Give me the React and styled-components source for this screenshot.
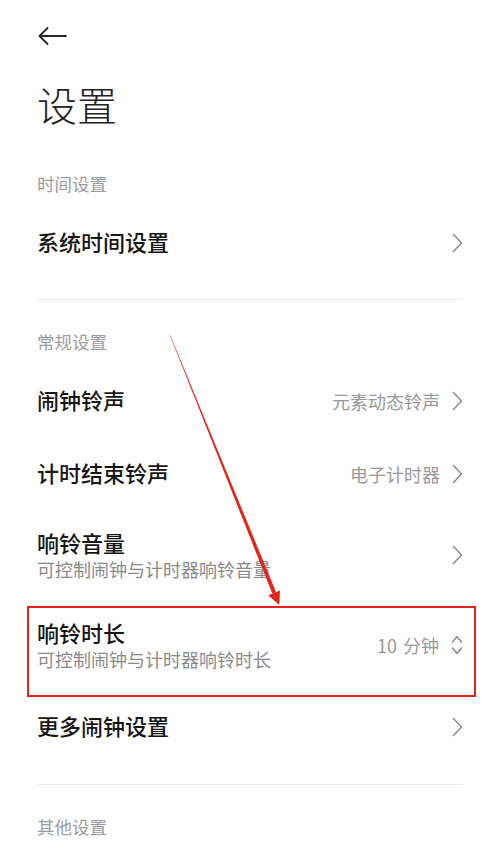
import React from 'react';
import styled, { createGlobalStyle } from 'styled-components';

const GlobalStyle = createGlobalStyle`
  html, body { margin: 0; padding: 0; background: #fff; }
  body { font-family: "Noto Sans CJK SC", "Noto Sans", sans-serif; }
`;

const Page = styled.div`
  position: relative;
  width: 500px;
  height: 860px;
  overflow: hidden;
  box-sizing: border-box;
  padding: 26px 37px 0;
  background: #fff;
`;

const BackButton = styled.div`
  width: 30px;
  height: 20px;
  display: flex;
  align-items: center;
`;

const Title = styled.h1`
  margin: 30px 0 0;
  font-size: 40px;
  line-height: 56px;
  font-weight: 300;
  color: #222;
`;

const SectionHeader = styled.div`
  padding: ${p => p.$first ? '41px' : '31px'} 0 11px;
  font-size: 17.5px;
  line-height: 22px;
  color: #9b9ca3;
`;

const Row = styled.div`
  position: relative;
  display: flex;
  align-items: center;
  justify-content: space-between;
  height: ${p => (p.$tall ? '90px' : '73px')};
`;

const TextBlock = styled.div`
  display: flex;
  flex-direction: column;
  padding-bottom: 3px;
`;

const ItemTitle = styled.div`
  font-size: 22px;
  line-height: 30px;
  font-weight: 500;
  color: #151515;
`;

const ItemSub = styled.div`
  font-size: 18px;
  line-height: 24px;
  color: #8a8a8a;
`;

const Right = styled.div`
  display: flex;
  align-items: center;
  gap: 12px;
`;

const Value = styled.span`
  font-size: 18px;
  color: #999;
  word-spacing: 2px;
`;

const Divider = styled.div`
  height: 1px;
  background: #ebebeb;
  margin-top: ${p => p.$gap}px;
`;

const Highlight = styled.div`
  position: absolute;
  left: -10px;
  right: -13px;
  top: 6px;
  bottom: -7px;
  border: 2.5px solid #e2251c;
  pointer-events: none;
`;

const Overlay = styled.svg`
  position: absolute;
  left: 0;
  top: 0;
  pointer-events: none;
`;

const Chevron = () => (
  <svg width="11" height="20" viewBox="0 0 11 20">
    <path d="M1.5 1.5 L9.5 10 L1.5 18.5" fill="none" stroke="#8c8c8c" strokeWidth="1.5" strokeLinecap="round" strokeLinejoin="round" />
  </svg>
);

const UpDown = () => (
  <svg width="12" height="22" viewBox="0 0 12 22">
    <path d="M1.5 8 L6 2.5 L10.5 8 M1.5 14 L6 19.5 L10.5 14" fill="none" stroke="#8c8c8c" strokeWidth="1.5" strokeLinecap="round" strokeLinejoin="round" />
  </svg>
);

const BackArrow = () => (
  <svg width="30" height="20" viewBox="0 0 30 20">
    <path d="M29 10 H2.5 M10.5 2 L2.5 10 L10.5 18" fill="none" stroke="#2a2a2a" strokeWidth="1.9" strokeLinecap="round" strokeLinejoin="round" />
  </svg>
);

function Item({ title, sub, value, tall, updown, children }) {
  return (
    <Row $tall={tall}>
      <TextBlock>
        <ItemTitle>{title}</ItemTitle>
        {sub && <ItemSub>{sub}</ItemSub>}
      </TextBlock>
      <Right>
        {value && <Value>{value}</Value>}
        {updown ? <UpDown /> : <Chevron />}
      </Right>
      {children}
    </Row>
  );
}

export default function App() {
  return (
    <>
      <GlobalStyle />
      <Page>
        <BackButton><BackArrow /></BackButton>
        <Title>设置</Title>

        <SectionHeader $first>时间设置</SectionHeader>
        <Item title="系统时间设置" />
        <Divider $gap={20} />

        <SectionHeader>常规设置</SectionHeader>
        <Item title="闹钟铃声" value="元素动态铃声" />
        <Item title="计时结束铃声" value="电子计时器" />
        <Item title="响铃音量" sub="可控制闹钟与计时器响铃音量" tall />
        <Item title="响铃时长" sub="可控制闹钟与计时器响铃时长" value="10 分钟" tall updown>
          <Highlight />
        </Item>
        <Item title="更多闹钟设置" />
        <Divider $gap={21} />

        <SectionHeader>其他设置</SectionHeader>

        <Overlay width="500" height="860" viewBox="0 0 500 860">
          <polygon points="170.2,334.9 169.8,335.1 272.3,593.6 276.1,592.2" fill="#e3261c" />
          <polygon points="268.4,595.2 280.0,590.6 279.2,605" fill="#e3261c" />
        </Overlay>
      </Page>
    </>
  );
}
